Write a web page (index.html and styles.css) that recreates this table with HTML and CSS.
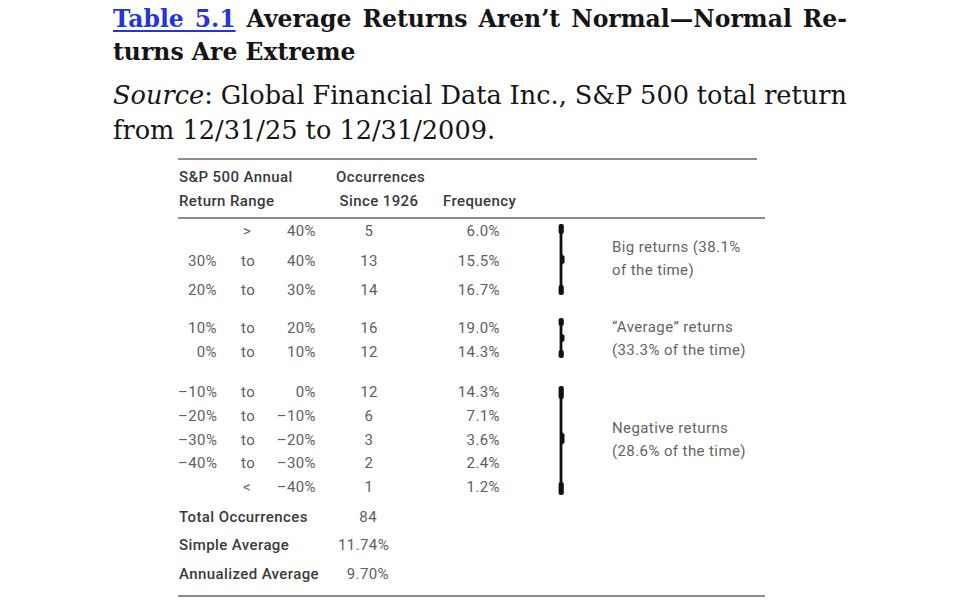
FILE: index.html
```html
<!DOCTYPE html>
<html>
<head>
<meta charset="utf-8">
<link rel="stylesheet" href="styles.css">
</head>
<body>
<div class="page">
  <div class="caption">
    <div class="title">
      <span class="line just"><a class="tlink" href="#">Table 5.1</a> Average Returns Aren’t Normal—Normal Re-</span>
      <span class="line">turns Are Extreme</span>
    </div>
    <div class="source">
      <span class="line just"><em>Source</em>: Global Financial Data Inc., S&amp;P 500 total return</span>
      <span class="line">from 12/31/25 to 12/31/2009.</span>
    </div>
  </div>

  <div class="table">
    <div class="rule rule-top"></div>
    <div class="head">
      <div class="h-range">S&amp;P 500 Annual<br>Return Range</div>
      <div class="h-occ">Occurrences<br>Since 1926</div>
      <div class="h-freq"><br>Frequency</div>
    </div>
    <div class="rule"></div>

    <div class="group g1">
      <div class="rows">
        <div class="row"><span class="c1"></span><span class="c2 sign">&gt;</span><span class="c3">40%</span><span class="c4">5</span><span class="c5">6.0%</span></div>
        <div class="row"><span class="c1">30%</span><span class="c2">to</span><span class="c3">40%</span><span class="c4">13</span><span class="c5">15.5%</span></div>
        <div class="row"><span class="c1">20%</span><span class="c2">to</span><span class="c3">30%</span><span class="c4">14</span><span class="c5">16.7%</span></div>
      </div>
      <div class="brace">
        <svg width="12" height="71" viewBox="0 0 12 71">
          <path d="M5 2 V69" stroke="#111" stroke-width="2.8" fill="none"/>
          <rect x="2.6" y="0" width="5.2" height="10" rx="2" fill="#111"/>
          <rect x="2.6" y="61" width="5.2" height="10" rx="2" fill="#111"/>
          <path d="M5 29 L8.5 32.5 L8.5 38.5 L5 42 Z" fill="#111"/>
        </svg>
      </div>
      <div class="note">Big returns (38.1%<br>of the time)</div>
    </div>

    <div class="group g2">
      <div class="rows">
        <div class="row"><span class="c1">10%</span><span class="c2">to</span><span class="c3">20%</span><span class="c4">16</span><span class="c5">19.0%</span></div>
        <div class="row"><span class="c1">0%</span><span class="c2">to</span><span class="c3">10%</span><span class="c4">12</span><span class="c5">14.3%</span></div>
      </div>
      <div class="brace">
        <svg width="12" height="40" viewBox="0 0 12 40">
          <path d="M5 2 V38" stroke="#111" stroke-width="2.8" fill="none"/>
          <rect x="2.6" y="0" width="5.2" height="8" rx="2" fill="#111"/>
          <rect x="2.6" y="32" width="5.2" height="8" rx="2" fill="#111"/>
          <path d="M5 15 L8.5 17.5 L8.5 22.5 L5 25 Z" fill="#111"/>
        </svg>
      </div>
      <div class="note">“Average” returns<br>(33.3% of the time)</div>
    </div>

    <div class="group g3">
      <div class="rows">
        <div class="row"><span class="c1">–10%</span><span class="c2">to</span><span class="c3">0%</span><span class="c4">12</span><span class="c5">14.3%</span></div>
        <div class="row"><span class="c1">–20%</span><span class="c2">to</span><span class="c3">–10%</span><span class="c4">6</span><span class="c5">7.1%</span></div>
        <div class="row"><span class="c1">–30%</span><span class="c2">to</span><span class="c3">–20%</span><span class="c4">3</span><span class="c5">3.6%</span></div>
        <div class="row"><span class="c1">–40%</span><span class="c2">to</span><span class="c3">–30%</span><span class="c4">2</span><span class="c5">2.4%</span></div>
        <div class="row"><span class="c1"></span><span class="c2 sign">&lt;</span><span class="c3">–40%</span><span class="c4">1</span><span class="c5">1.2%</span></div>
      </div>
      <div class="brace">
        <svg width="12" height="109" viewBox="0 0 12 109">
          <path d="M5 2 V107" stroke="#111" stroke-width="2.8" fill="none"/>
          <rect x="2.6" y="0" width="5.2" height="13" rx="2" fill="#111"/>
          <rect x="2.6" y="96" width="5.2" height="13" rx="2" fill="#111"/>
          <path d="M5 45 L8.5 48.5 L8.5 56.5 L5 60 Z" fill="#111"/>
        </svg>
      </div>
      <div class="note">Negative returns<br>(28.6% of the time)</div>
    </div>

    <div class="summary">
      <div class="srow"><span class="slabel">Total Occurrences</span><span class="sval sval-int">84</span></div>
      <div class="srow"><span class="slabel">Simple Average</span><span class="sval">11.74%</span></div>
      <div class="srow"><span class="slabel">Annualized Average</span><span class="sval">9.70%</span></div>
    </div>
    <div class="rule rule-bottom"></div>
  </div>
</div>
</body>
</html>
```

FILE: styles.css
```css
* { box-sizing: border-box; }
html, body { margin: 0; padding: 0; background: #fff; }
body { width: 960px; height: 603px; overflow: hidden; }

.page { padding: 3px 0 0 113px; }

.caption {
  width: 734px;
  font-family: "DejaVu Serif", serif;
  color: #151515;
}
.line { display: block; white-space: nowrap; }
.just { white-space: normal; text-align: justify; text-align-last: justify; word-spacing: -6px; }

.title {
  font-weight: bold;
  font-size: 23.5px;
  line-height: 33px;
}
.tlink { color: #2433e0; text-decoration: underline; text-underline-offset: 3px; }

.source {
  margin-top: 9px;
  font-size: 25.6px;
  line-height: 35px;
}
.source em { font-style: italic; }

/* table */
.table {
  margin: 10px 0 0 65px;
  width: 587px;
  font-family: Roboto, "Liberation Sans", sans-serif;
  font-size: 15px;
  letter-spacing: 0.4px;
  color: #5e5e5e;
}
.rule { height: 2px; background: #8e8e8e; }
.rule-top { width: 579px; }

.head {
  display: flex;
  padding: 5px 0 4px;
  line-height: 24px;
  color: #3a3a3a;
  font-weight: 500;
}
.h-range { width: 138px; padding-left: 1px; }
.h-occ { width: 106px; padding-left: 20px; text-align: center; white-space: nowrap; }
.h-freq { padding-left: 21px; }

.group { display: flex; }
.rows { width: 322px; display: flex; flex-direction: column; }
.row { display: flex; height: 24px; line-height: 24px; white-space: nowrap; }
.c1 { width: 39px; text-align: right; }
.c2 { width: 56px; padding-left: 24px; }
.c2.sign { padding-left: 26px; }
.c3 { width: 43px; text-align: right; }
.c4 { width: 106px; text-align: center; }
.c5 { width: 78px; text-align: right; }

.brace { width: 112px; padding-left: 56px; }
.brace svg { display: block; }
.note {
  flex: 1;
  display: flex;
  align-items: center;
  line-height: 23px;
  color: #646464;
  white-space: nowrap;
}

.g1 .rows { gap: 5.5px; }
.g1 .brace { padding-top: 5px; }
.g1 .note { padding-bottom: 4px; }

.g2 { margin-top: 14px; }
.g2 .brace { padding-top: 2px; }
.g2 .note { align-items: flex-start; }

.g3 { margin-top: 17px; }
.g3 .row { height: 23.75px; line-height: 23.75px; }
.g3 .brace { padding-top: 5px; }

.summary { margin-top: 3px; }
.srow { display: flex; height: 28.5px; line-height: 28.5px; white-space: nowrap; }
.slabel { width: 160px; padding-left: 1px; color: #3a3a3a; font-weight: 500; }
.sval { width: 51px; text-align: right; }
.sval-int { padding-right: 12px; }

.rule-bottom { margin-top: 7px; }
```
